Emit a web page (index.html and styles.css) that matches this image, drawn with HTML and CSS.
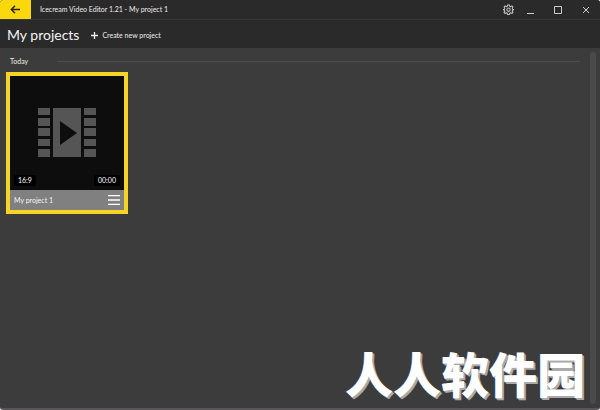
FILE: index.html
```html
<!DOCTYPE html>
<html lang="en">
<head>
    <meta charset="UTF-8">
    <meta name="viewport" content="width=device-width, initial-scale=1.0">
    <title>Icecream Video Editor 1.21 - My project 1</title>
    <link rel="stylesheet" href="styles.css">
</head>
<body>
    <div class="window">
        <div class="titlebar">
            <button class="back" aria-label="Back">
                <svg width="11" height="9" viewBox="0 0 11 9"><path d="M10 4.500H1.500M5 .8L1.300 4.500L5 8.200" fill="none" stroke="#2a2200" stroke-width="1.400"/></svg>
            </button>
            <div class="title">Icecream Video Editor 1.21 - My project 1</div>
            <div class="window-buttons">
                <button aria-label="Settings">
                    <svg width="11" height="11" viewBox="0 0 24 24" fill="none" stroke="#c4c4c4" stroke-width="2.200" stroke-linejoin="round">
                        <path d="M10 2h4l.7 3 2 .9L19.300 4.200l2.500 2.500-1.700 2.600.9 2 2.500.7v0l-2.500 1.700-.9 2 1.700 2.600-2.500 2.500-2.600-1.700-2 .9-.7 3h-4l-.7-3-2-.9-2.600 1.700-2.500-2.500 1.700-2.600-.9-2-2.500-1.700 2.500-.7.900-2-1.700-2.600 2.500-2.500 2.600 1.700 2-.9z"/>
                        <circle cx="12" cy="12.500" r="3.600"/>
                    </svg>
                </button>
                <button aria-label="Minimize">
                    <svg width="8" height="8" viewBox="0 0 8 8"><path d="M1 7.500h7" stroke="#d0d0d0"/></svg>
                </button>
                <button aria-label="Maximize">
                    <svg width="8" height="8" viewBox="0 0 8 8"><path d="M.5.5h7v7h-7z" fill="none" stroke="#c8c8c8"/></svg>
                </button>
                <button aria-label="Close">
                    <svg width="8" height="8" viewBox="0 0 8 8"><path d="M1 1l6 6M7 1L1 7" stroke="#d0d0d0"/></svg>
                </button>
            </div>
        </div>

        <div class="header">
            <h1>My projects</h1>
            <button class="create">
                <svg width="7" height="7" viewBox="0 0 7 7"><path d="M3.500 0v7M0 3.500h7" stroke="#eee" stroke-width="1.300"/></svg>
                Create new project
            </button>
        </div>

        <div class="content">
            <div class="projects">
                <h2>Today</h2>
                <div class="card">
                    <div class="thumb">
                        <svg class="film" width="58" height="49" viewBox="0 0 58 49" fill="#555">
                            <path d="M15 0h28v49H15zM22 13v24l17-12z" fill-rule="evenodd"/>
                            <path d="M0 0h12v7H0zM0 10h12v8H0zM0 20h12v8H0zM0 31h12v7H0zM0 41h12v8H0z"/>
                            <path d="M46 0h12v7H46zM46 10h12v8H46zM46 20h12v8H46zM46 31h12v7H46zM46 41h12v8H46z"/>
                        </svg>
                        <div class="badges">
                            <span class="badge">16:9</span>
                            <span class="badge">00:00</span>
                        </div>
                    </div>
                    <div class="card-footer">
                        <span>My project 1</span>
                        <button aria-label="Project menu">
                            <svg width="12" height="10" viewBox="0 0 12 10"><path d="M0 .6h12M0 5h12M0 9.400h12" stroke="#fff" stroke-width="1.300"/></svg>
                        </button>
                    </div>
                </div>
            </div>
            <div class="scrollbar"></div>
            <div class="watermark" lang="zh-CN">人人软件园</div>
        </div>
    </div>
</body>
</html>
```
FILE: styles.css
```css
* {
    box-sizing: border-box;
}

body {
    margin: 0;
    background: #fff;
    color: #ececec;
    font-family: Lato, "Open Sans", sans-serif;
    font-size: 7px;
    line-height: 11px;
}

button {
    display: flex;
    align-items: center;
    justify-content: center;
    margin: 0;
    padding: 0;
    border: 0;
    background: none;
    color: inherit;
    font: inherit;
}

svg {
    display: block;
}

.window {
    display: flex;
    flex-direction: column;
    min-height: 100vh;
    background: #3c3c3c;
    border-radius: 3px;
    border-bottom: 2px solid #5a5558;
    overflow: hidden;
}

.titlebar {
    display: flex;
    align-items: center;
    height: 20px;
    background: #2a2a2a;
    border-bottom: 1px solid #383838;
}

.back {
    width: 31px;
    height: 100%;
    background: #fbd80b;
}

.title {
    flex: 1;
    padding-left: 9px;
}

.window-buttons {
    display: flex;
    align-items: center;
    padding-right: 10px;
    gap: 20px;
}

.window-buttons button:first-child {
    margin-right: -8px;
}

.header {
    display: flex;
    align-items: center;
    height: 28px;
    padding: 2px 7px 0;
    gap: 12px;
    background: #2a2a2a;
}

h1 {
    margin: 0;
    font-size: 14px;
    line-height: 20px;
    font-weight: normal;
    color: #f4f4f4;
}

.create {
    gap: 4px;
}

.content {
    position: relative;
    flex: 1;
    display: flex;
    padding: 4px 4px 4px 6px;
}

.projects {
    flex: 1;
}

/* Group name with a line up to the right edge */
h2 {
    display: flex;
    align-items: center;
    margin: 4px 10px 5px 4px;
    gap: 29px;
    font-size: 7px;
    line-height: 11px;
    font-weight: normal;
}

h2::after {
    content: "";
    flex: 1;
    height: 1px;
    background: #4e4e4e;
}

.card {
    width: 122px;
    border: 4px solid #f5d327;
}

.thumb {
    display: flex;
    flex-direction: column;
    align-items: center;
    height: 114px;
    padding: 32px 4px 4px;
    background: #0d0d0d;
}

.badges {
    display: flex;
    justify-content: space-between;
    width: 100%;
    margin-top: auto;
}

.badge {
    padding: 0 4px;
    border-radius: 2px;
    background: #000;
    color: #fff;
}

.card-footer {
    display: flex;
    align-items: center;
    justify-content: space-between;
    height: 20px;
    padding: 0 4px;
    background: #808080;
    color: #f4f4f4;
}

.scrollbar {
    width: 6px;
    background: #4a4a4a;
    border-radius: 3px;
}

.watermark {
    position: absolute;
    right: 15px;
    bottom: 8px;
    color: #fff;
    font-family: "Noto Sans CJK SC", sans-serif;
    font-size: 48px;
    line-height: 56px;
    font-weight: 900;
    text-shadow: 1px 1px #aaa, 2px 2px #aaa;
}
```
